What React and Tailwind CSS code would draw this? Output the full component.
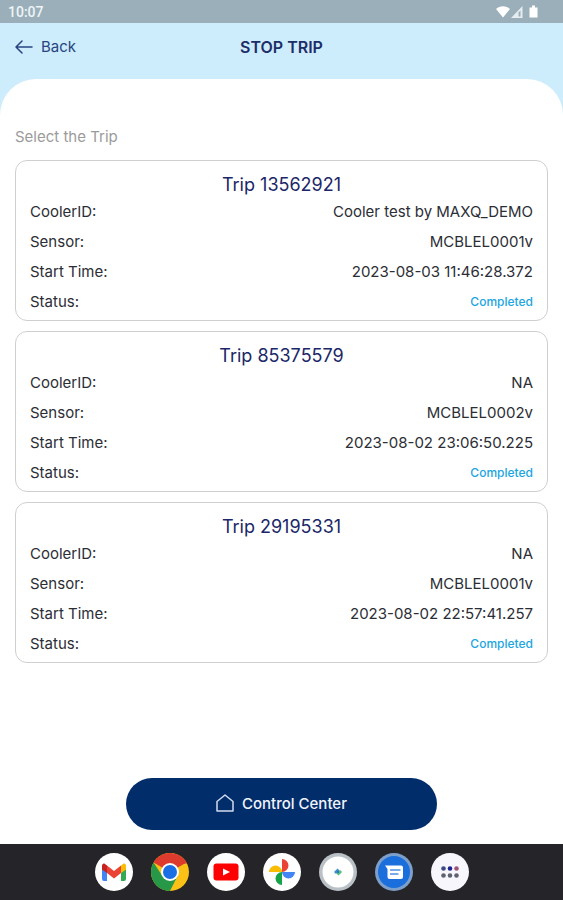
import React from 'react';

const trips = [
  { id: '13562921', cooler: 'Cooler test by MAXQ_DEMO', sensor: 'MCBLEL0001v', start: '2023-08-03 11:46:28.372', status: 'Completed' },
  { id: '85375579', cooler: 'NA', sensor: 'MCBLEL0002v', start: '2023-08-02 23:06:50.225', status: 'Completed' },
  { id: '29195331', cooler: 'NA', sensor: 'MCBLEL0001v', start: '2023-08-02 22:57:41.257', status: 'Completed' },
];

const StatusBar = () => (
  <div className="flex h-[23px] items-center justify-between bg-[#9aafb9] pl-2 pr-[25px]">
    <span className="font-[Roboto,sans-serif] text-sm font-medium text-[#eef4f7]">10:07</span>
    <svg width="42" height="14" viewBox="0 0 42 14" fill="white" aria-hidden="true">
      <path d="M0 4C4 .4 10 .4 14 4L7 12.500z" />
      <path d="M15 13 26.500 1V13z" fill="#e6edf0" />
      <path d="M22.500 7.500 24.500 5.500V11.500H22.500z" fill="#9aafb9" />
      <path d="M33.500 2.500H36V.5h3v2h2.500V12.500h-8z" />
    </svg>
  </div>
);

const Header = () => (
  <header className="grid h-12 grid-cols-[1fr_auto_1fr] items-center px-[15px] text-[#1d2d68]">
    <button type="button" className="flex items-center gap-2 justify-self-start text-[15px] leading-5 text-[#28457f]">
      <svg width="18" height="14" viewBox="0 0 18 14" fill="none" stroke="#28457f" strokeWidth="1.500" strokeLinecap="round" strokeLinejoin="round" aria-hidden="true">
        <path d="M17 7H1M7 1 1 7l6 6" />
      </svg>
      Back
    </button>
    <h1 className="text-base font-semibold leading-5">STOP TRIP</h1>
  </header>
);

const Row = ({ label, children }) => (
  <div className="flex h-[30px] items-center justify-between">
    <dt>{label}:</dt>
    <dd className="flex items-center">{children}</dd>
  </div>
);

const TripCard = ({ trip }) => (
  <article className="rounded-xl border border-[#cfcfcf] px-[14px] pt-3 pb-[3px]">
    <h2 className="text-center text-lg leading-6 text-[#1b2768]">Trip {trip.id}</h2>
    <dl className="text-[15px] leading-5 text-[#2c2e35]">
      <Row label="CoolerID">{trip.cooler}</Row>
      <Row label="Sensor">{trip.sensor}</Row>
      <Row label="Start Time">{trip.start}</Row>
      <Row label="Status">
        <span className="text-xs font-medium text-[#20a5df]">{trip.status}</span>
      </Row>
    </dl>
  </article>
);

const GmailIcon = () => (
  <svg viewBox="0 0 38 38" aria-hidden="true">
    <circle cx="19" cy="19" r="19" fill="#fff" />
    <path d="M7 13v13a2 2 0 0 0 2 2h3V16z" fill="#4285f4" />
    <path d="M31 13v13a2 2 0 0 1-2 2h-3V16z" fill="#34a853" />
    <path d="M26 12.500 28 11c1.500-1 3 0 3 2v3.500L26 20z" fill="#fbbc04" />
    <path d="M12 12.500 10 11c-1.500-1-3 0-3 2v3.500L12 20z" fill="#c5221f" />
    <path d="M12 12.500 19 18l7-5.500V20l-7 5.500L12 20z" fill="#ea4335" />
  </svg>
);

const ChromeIcon = () => (
  <svg viewBox="0 0 38 38" aria-hidden="true">
    <circle cx="19" cy="19" r="19" fill="#fbc116" />
    <path d="M19 19 2.550 9.500A19 19 0 0 1 35.450 9.500z" fill="#dd3b2d" />
    <path d="M19 10.500H36L35.450 9.500H19z" fill="#dd3b2d" />
    <path d="M2.550 9.500A19 19 0 0 0 19 38L26.400 23.300 11.600 23.300z" fill="#279847" />
    <circle cx="19" cy="19" r="9" fill="#fff" />
    <circle cx="19" cy="19" r="7" fill="#1b6fe5" />
  </svg>
);

const YoutubeIcon = () => (
  <svg viewBox="0 0 38 38" aria-hidden="true">
    <circle cx="19" cy="19" r="19" fill="#fff" />
    <rect x="6.500" y="10.500" width="25" height="17" rx="3" fill="#f00" />
    <path d="M16 15.500v7l7-3.500z" fill="#fff" />
  </svg>
);

const PhotosIcon = () => (
  <svg viewBox="0 0 38 38" aria-hidden="true">
    <circle cx="19" cy="19" r="19" fill="#fff" />
    <path d="M19 6a6.500 6.500 0 0 1 0 13z" fill="#ea4335" />
    <path d="M32 19a6.500 6.500 0 0 1-13 0z" fill="#4285f4" />
    <path d="M19 32a6.500 6.500 0 0 1 0-13z" fill="#17a34a" />
    <path d="M6 19a6.500 6.500 0 0 1 13 0z" fill="#fbbc04" />
  </svg>
);

const CoolerIcon = () => (
  <svg viewBox="0 0 38 38" aria-hidden="true">
    <circle cx="19" cy="19" r="19" fill="#b9c1c6" />
    <circle cx="19" cy="19" r="15.500" fill="#fff" />
    <path d="m18.500 15.500 2 2-3.500 3.500-2-2z" fill="#3f8fd0" />
    <path d="m21 17 2 2-3.500 3.500-2-2z" fill="#4cc07c" />
    <circle cx="19" cy="19" r="1" fill="#2a62b8" />
  </svg>
);

const MessagesIcon = () => (
  <svg viewBox="0 0 38 38" aria-hidden="true">
    <circle cx="19" cy="19" r="19" fill="#7d9fca" />
    <circle cx="19" cy="19" r="16" fill="#1a6fdc" />
    <path d="M10 12.500h16a2 2 0 0 1 2 2V24a2 2 0 0 1-2 2H14.500a2 2 0 0 1-2-2v-8z" fill="#fff" />
    <path d="M15 17h10.500M15 21h8.500" stroke="#4f8fe0" strokeWidth="1.500" />
  </svg>
);

const AppsIcon = () => (
  <svg viewBox="0 0 38 38" aria-hidden="true">
    <circle cx="19" cy="19" r="19" fill="#f8f6fd" />
    <circle cx="12.500" cy="15.500" r="2.300" fill="#3b4a86" />
    <circle cx="19" cy="15.500" r="2.300" fill="#1d2291" />
    <circle cx="25.500" cy="15.500" r="2.300" fill="#9d5472" />
    <circle cx="12.500" cy="22.500" r="2.300" fill="#5d6270" />
    <circle cx="19" cy="22.500" r="2.300" fill="#5d6270" />
    <circle cx="25.500" cy="22.500" r="2.300" fill="#5d6270" />
  </svg>
);

const dockApps = [
  { name: 'Gmail', Icon: GmailIcon },
  { name: 'Chrome', Icon: ChromeIcon },
  { name: 'YouTube', Icon: YoutubeIcon },
  { name: 'Photos', Icon: PhotosIcon },
  { name: 'Cooler', Icon: CoolerIcon },
  { name: 'Messages', Icon: MessagesIcon },
  { name: 'All apps', Icon: AppsIcon },
];

const Dock = () => (
  <nav className="flex h-14 items-center justify-center gap-[18px] bg-[#252529]">
    {dockApps.map(({ name, Icon }) => (
      <button key={name} type="button" aria-label={name} className="size-[38px] rounded-full">
        <Icon />
      </button>
    ))}
  </nav>
);

const App = () => {
  return (
    <div className="flex min-h-screen flex-col bg-[#cdecfc] font-[Inter,sans-serif]">
      <StatusBar />
      <Header />
      <main className="mt-2 flex flex-1 flex-col rounded-t-[36px] bg-white px-[15px] pt-12">
        <p className="text-[15px] leading-5 text-[#9b9b9b]">Select the Trip</p>
        <div className="mt-[13px] flex flex-col gap-[10px]">
          {trips.map((trip) => (
            <TripCard key={trip.id} trip={trip} />
          ))}
        </div>
        <button
          type="button"
          className="mx-auto mt-auto mb-[14px] flex h-[52px] w-7/12 items-center justify-center gap-2 rounded-full bg-[#022d6b] text-[15px] font-medium text-[#f1f4fb]"
        >
          <svg width="18" height="20" viewBox="0 0 18 20" fill="none" stroke="#d3dcf0" strokeWidth="1.500" strokeLinejoin="round" aria-hidden="true">
            <path d="M1 7.500 9 1l8 6.500V17H1z" />
          </svg>
          Control Center
        </button>
      </main>
      <Dock />
    </div>
  );
};

export default App;
